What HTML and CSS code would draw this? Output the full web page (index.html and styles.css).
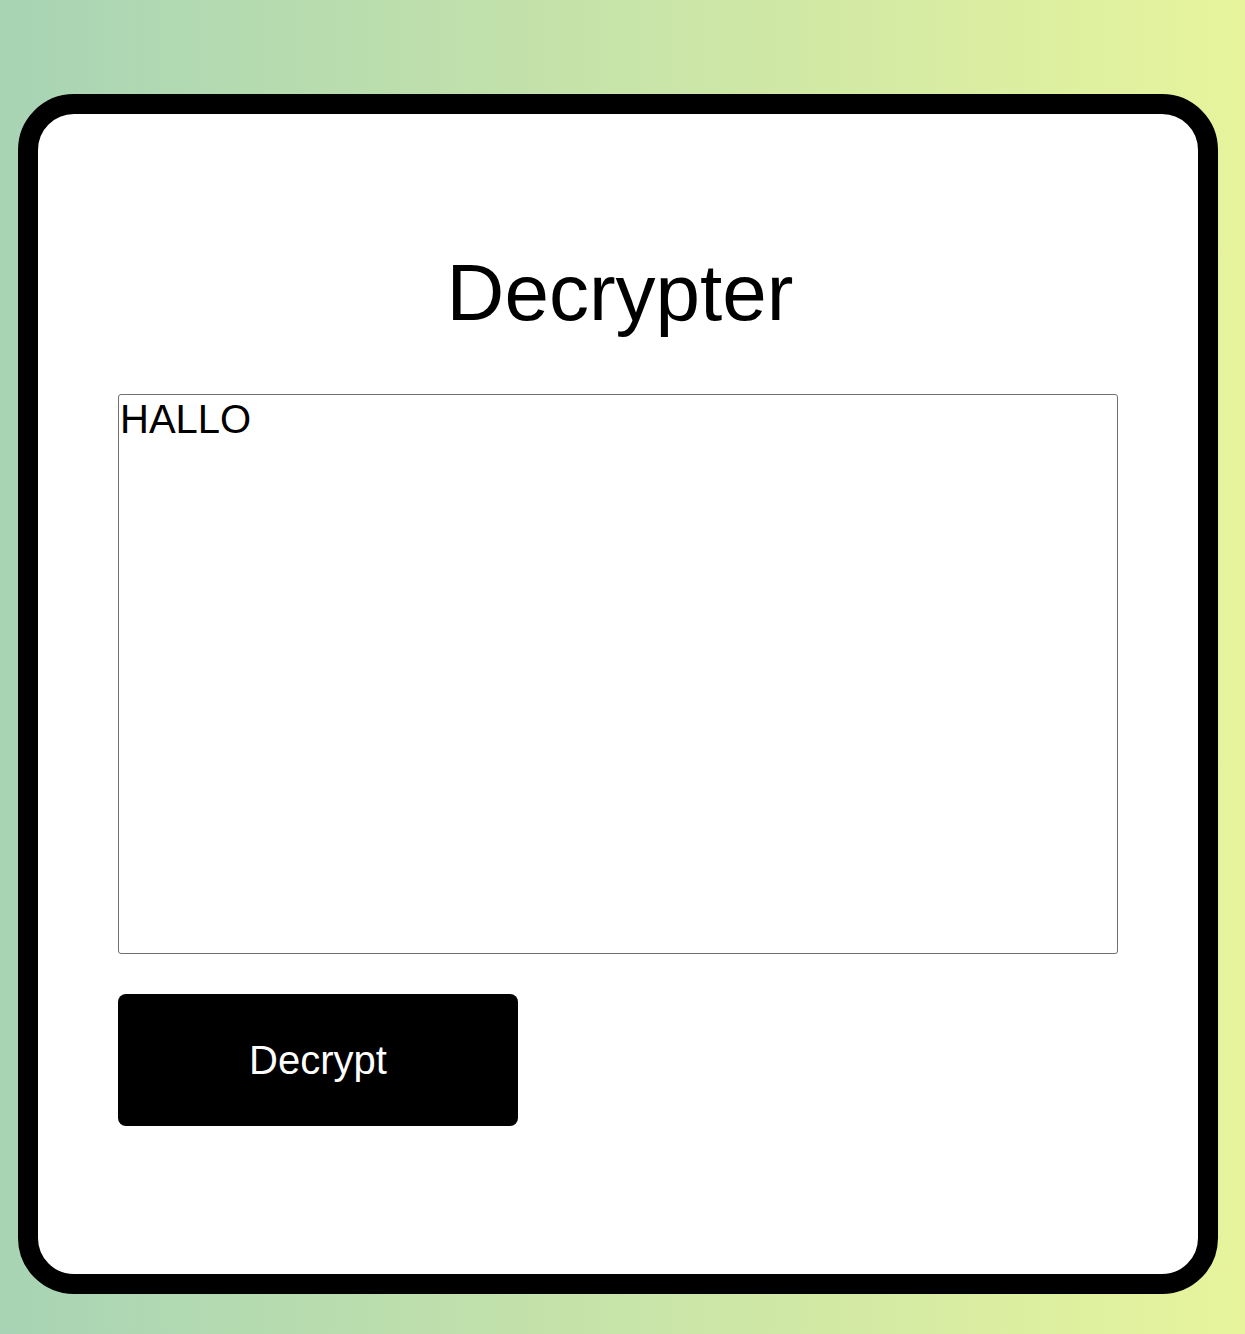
FILE: index.html
```html
<!DOCTYPE html>
<html lang="en">
<head>
<meta charset="utf-8">
<title>Decrypter</title>
<link rel="stylesheet" href="styles.css">
</head>
<body>
  <main class="card">
    <h1 class="title">Decrypter</h1>
    <textarea class="input">HALLO</textarea>
    <button class="btn" type="button">Decrypt</button>
  </main>
</body>
</html>
```

FILE: styles.css
```css
html, body {
  margin: 0;
  padding: 0;
}

body {
  min-height: 1334px;
  background: linear-gradient(to right, #a8d4b5, #e7f49c);
  font-family: "Liberation Sans", Arial, Helvetica, sans-serif;
  padding: 94px 0 0 18px;
  box-sizing: border-box;
}

.card {
  box-sizing: border-box;
  width: 1200px;
  height: 1200px;
  background: #fff;
  border: 20px solid #000;
  border-radius: 56px;
  padding: 80px;
  display: flex;
  flex-direction: column;
  align-items: flex-start;
}

.title {
  align-self: stretch;
  text-align: center;
  font-size: 80px;
  font-weight: 400;
  line-height: 92px;
  padding-left: 4px;
  margin: 53px 0 55px;
  color: #000;
}

.input {
  box-sizing: border-box;
  width: 1000px;
  height: 560px;
  margin: 0;
  padding: 2px 1px;
  border: 1px solid #6f6f6f;
  border-radius: 3px;
  font-family: "Liberation Sans", Arial, Helvetica, sans-serif;
  font-size: 40px;
  color: #000;
  resize: none;
  background: #fff;
}

.btn {
  margin-top: 40px;
  width: 400px;
  height: 132px;
  background: #000;
  color: #fff;
  border: none;
  border-radius: 8px;
  font-family: "Liberation Sans", Arial, Helvetica, sans-serif;
  font-size: 40px;
  cursor: pointer;
}
```
